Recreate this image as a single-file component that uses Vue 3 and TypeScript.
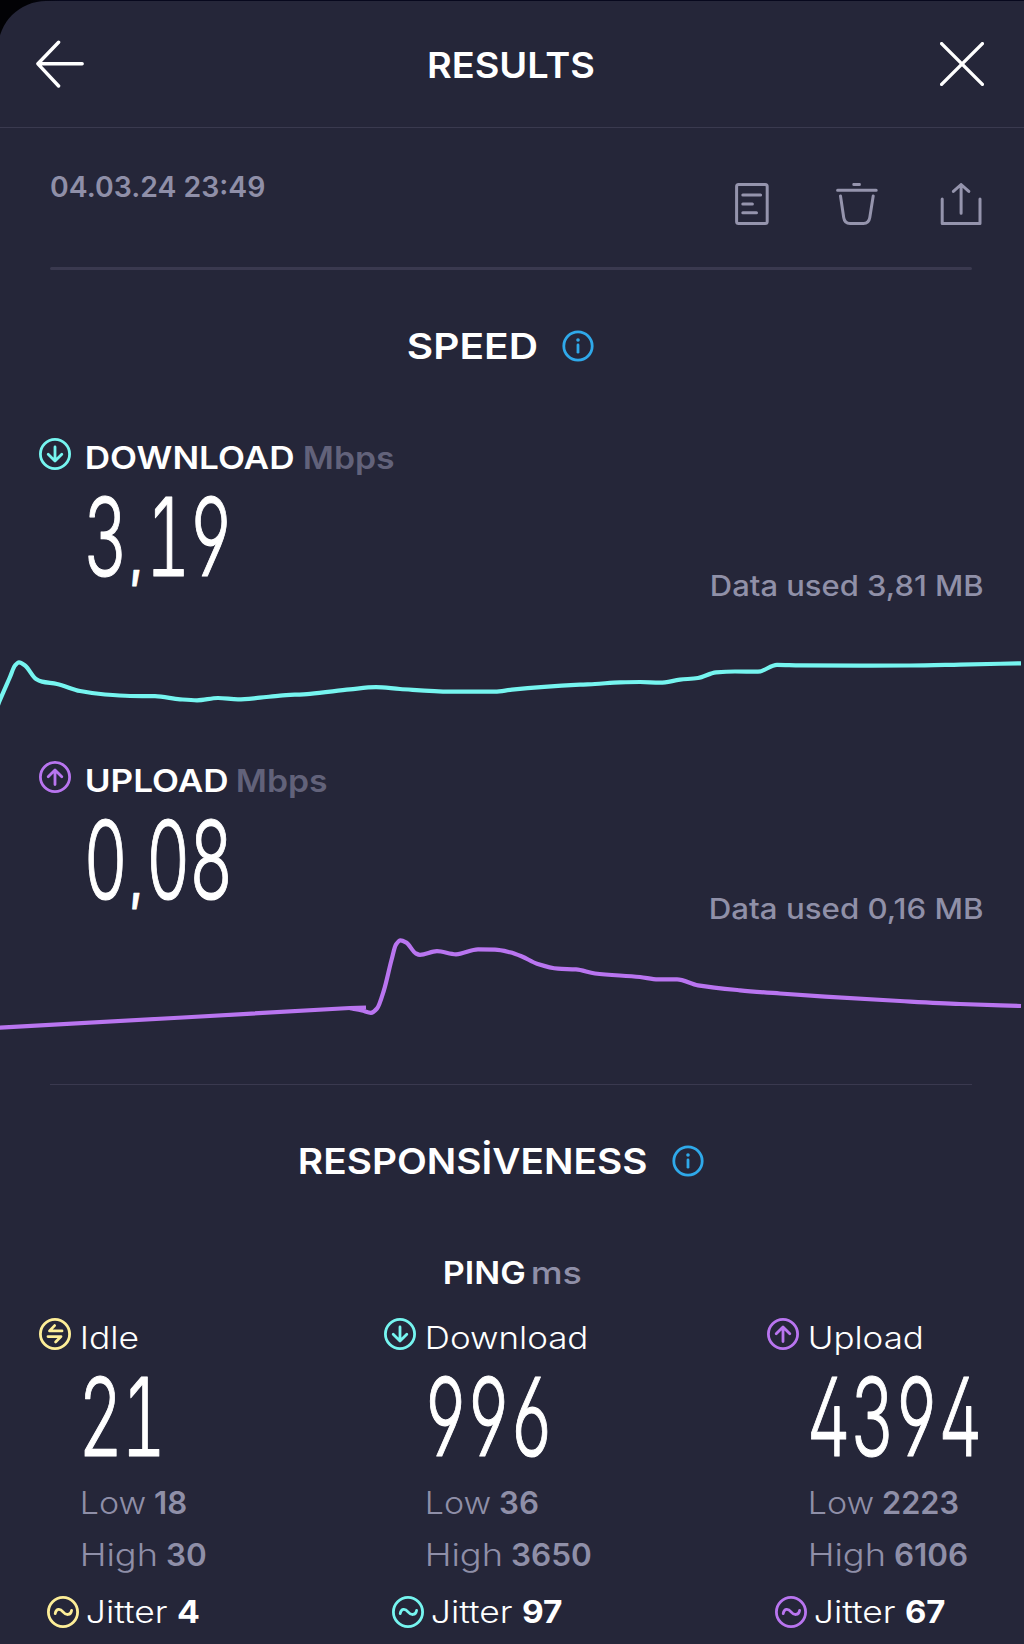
<script setup lang="ts">
import { defineComponent, h } from 'vue'

const FONT = 'Inter, "Open Sans", sans-serif'
const CAP_RATIO = 0.727

const canvas = document.createElement('canvas').getContext('2d')!

// Label whose visible glyphs span exactly `w` pixels; the box is the cap height.
const FitText = defineComponent({
  props: {
    text: { type: String, required: true },
    w: { type: Number, required: true },
    cap: { type: Number, required: true },
    weight: { type: Number, default: 580 },
  },
  setup(props) {
    return () => {
      const size = props.cap / CAP_RATIO
      canvas.font = `${props.weight} ${size}px ${FONT}`
      const m = canvas.measureText(props.text)
      const sx = props.w / (m.actualBoundingBoxLeft + m.actualBoundingBoxRight)
      return h(
        'svg',
        { width: props.w, height: props.cap, style: 'display:block;overflow:visible;flex:none' },
        [
          h(
            'text',
            {
              x: m.actualBoundingBoxLeft,
              y: props.cap,
              transform: `scale(${sx.toFixed(4)} 1)`,
              fill: 'currentColor',
              'font-family': FONT,
              'font-size': size,
              'font-weight': props.weight,
            },
            props.text,
          ),
        ],
      )
    }
  },
})

// Tall condensed readout digits on a fixed pitch, with open 4, 6 and 9.
const DIGIT_SCALE = 0.63
const BigNumber = defineComponent({
  props: {
    value: { type: String, required: true },
    pitch: { type: Number, default: 43 },
  },
  setup(props) {
    return () => {
      let pos = 0
      const xs: number[] = []
      for (const c of props.value) {
        xs.push((pos + (c === ',' ? 4.2 : 16.7)) / DIGIT_SCALE)
        pos += c === ',' ? 19.3 : props.pitch
      }
      return h(
        'svg',
        { width: pos, height: 79, style: 'display:block;overflow:visible;flex:none' },
        [
          h(
            'text',
            {
              x: xs.map((v) => v.toFixed(2)).join(' '),
              y: 79,
              'text-anchor': 'middle',
              transform: `scale(${DIGIT_SCALE} 1)`,
              fill: '#fff',
              stroke: '#fff',
              'stroke-width': 1.2,
              'stroke-linejoin': 'round',
              'font-family': 'Inter, Roboto, sans-serif',
              'font-size': 108.5,
              'font-weight': 300,
              style: 'font-feature-settings: "tnum", "cv02", "cv03", "cv04"',
            },
            props.value
              .split(/(,)/)
              .map((part) =>
                part === ',' ? h('tspan', { 'font-size': 50, 'font-weight': 800 }, part) : part,
              ),
          ),
        ],
      )
    }
  },
})

const ICONS: Record<string, string> = {
  down: 'M16 9V22.5M9.2 16.2L16 23L22.8 16.2',
  up: 'M16 23.5V9.5M9.2 15.8L16 9L22.8 15.8',
  idle: 'M23 12.9H10.5L15.6 7.6M9 18.6H22L16.6 24',
  wave: 'M8.2 17.6C9 12.6 13 12.2 16 15.8C19.2 19.6 23.6 19.6 24.6 14.4',
}

const RoundIcon = defineComponent({
  props: { name: { type: String, required: true }, color: { type: String, required: true } },
  setup(props) {
    return () =>
      h(
        'svg',
        {
          width: 32,
          height: 32,
          viewBox: '0 0 32 32',
          fill: 'none',
          stroke: props.color,
          'stroke-width': 2.8,
          'stroke-linecap': 'round',
          'stroke-linejoin': 'round',
          style: 'display:block;flex:none',
        },
        [h('circle', { cx: 16, cy: 16, r: 14.6 }), h('path', { d: ICONS[props.name] })],
      )
  },
})

type Pt = [number, number]

// Monotone cubic interpolation through the samples.
function smooth(p: Pt[]): string {
  const n = p.length
  const d: number[] = []
  for (let i = 0; i < n - 1; i++) d.push((p[i + 1][1] - p[i][1]) / (p[i + 1][0] - p[i][0]))
  const t: number[] = p.map((_, i) => {
    if (i === 0) return d[0]
    if (i === n - 1) return d[n - 2]
    if (d[i - 1] * d[i] <= 0) return 0
    return (2 * d[i - 1] * d[i]) / (d[i - 1] + d[i])
  })
  let s = `M${p[0][0]} ${p[0][1]}`
  for (let i = 0; i < n - 1; i++) {
    const k = (p[i + 1][0] - p[i][0]) / 3
    s += `C${p[i][0] + k} ${p[i][1] + t[i] * k} ${p[i + 1][0] - k} ${p[i + 1][1] - t[i + 1] * k} ${p[i + 1][0]} ${p[i + 1][1]}`
  }
  return s
}

const CYAN = '#76f5f0'
const PURPLE = '#b975f0'
const YELLOW = '#fdee98'

const downloadLine = smooth([
  [-2, 65], [0, 60], [10, 37], [15, 25.5], [19, 22.3], [25, 25.5], [36, 39], [42, 41.6], [57, 44], [80, 51], [105, 54.5],
  [130, 56], [155, 56.2], [180, 59.3], [197, 60.3], [218, 58], [238, 59.4], [260, 57.7], [280, 55.6], [310, 53.8],
  [350, 49.4], [376, 47.2], [400, 49], [450, 51.6], [495, 51.7], [512, 49.6], [580, 44.7], [595, 44], [620, 42.3],
  [640, 42], [660, 42.7], [680, 39.7], [698, 38], [716, 32.3], [735, 31.5], [758, 31.7], [777, 24.8], [800, 25.3],
  [860, 25.6], [910, 25.5], [960, 24.6], [1021, 23.3],
])
const uploadBase = 'M-2 64.8L183 54.5L350 45L366 44.5'
const uploadLine = smooth([
  [350, 45.2], [362, 47.5], [371, 49.8], [377, 45.5], [384, 27], [391.5, -3], [396, -18.5], [400.5, -22.7], [406, -20.6],
  [416, -9.5], [420, -8.2], [437, -11.8], [456, -8.7], [478, -13.6], [495, -13.3], [510, -10.7], [522, -6.5],
  [537, 0.7], [558, 5.7], [576, 6.4], [595, 10.5], [640, 14], [658, 16.4], [677, 16.4], [698, 22.4], [740, 27.3],
  [780, 30.5], [825, 33.7], [900, 38], [960, 41], [1021, 43],
])

const speeds = [
  {
    icon: 'down', color: CYAN, label: 'DOWNLOAD', labelW: 206, gap: 12.5, value: '3,19',
    used: 'Data used 3,81 MB', usedW: 270, paths: [downloadLine],
  },
  {
    icon: 'up', color: PURPLE, label: 'UPLOAD', labelW: 140, gap: 11, value: '0,08',
    used: 'Data used 0,16 MB', usedW: 271, paths: [uploadBase, uploadLine],
  },
]

const pings = [
  {
    icon: 'idle', color: YELLOW, label: 'Idle', labelW: 56, value: '21', pitch: 43,
    low: '18', lowW: 31.5, high: '30', highW: 38.5, jitter: '4', jitterW: 21,
  },
  {
    icon: 'down', color: CYAN, label: 'Download', labelW: 159.5, value: '996', pitch: 43,
    low: '36', lowW: 38.3, high: '3650', highW: 78.5, jitter: '97', jitterW: 38.5,
  },
  {
    icon: 'up', color: PURPLE, label: 'Upload', labelW: 112, value: '4394', pitch: 43.9,
    low: '2223', lowW: 74.5, high: '6106', highW: 72.5, jitter: '67', jitterW: 38.5,
  },
]
</script>

<template>
  <div class="screen">
    <div class="panel">
      <header class="header">
        <svg class="back" width="48" height="48" viewBox="0 0 48 48">
          <path d="M46.2 23.8H2M22.6 2.2L1.9 23.8L22.6 46" />
        </svg>
        <FitText text="RESULTS" :w="164.6" :cap="26" />
        <svg class="close" width="44" height="44" viewBox="0 0 44 44">
          <path d="M1.6 1.6L42.4 42.4M42.4 1.6L1.6 42.4" />
        </svg>
      </header>

      <div class="meta">
        <FitText class="date" text="04.03.24 23:49" :w="213.5" :cap="20.3" />
        <div class="actions">
          <svg width="34" height="42" viewBox="0 0 34 42">
            <rect x="1.6" y="1.6" width="30.6" height="38.8" rx="2" />
            <path d="M7.8 12H25.6M7.8 21H17.4M7.8 29.8H21.5" />
          </svg>
          <svg width="42" height="42" viewBox="0 0 42 42">
            <path d="M17.8 1.4H23.4M1.6 7.3H40.2M4.5 13L7.7 34.5Q8.6 40.5 14 40.5H27.4Q32.8 40.5 33.8 34.5L37.2 13" />
          </svg>
          <svg width="42" height="42" viewBox="0 0 42 42">
            <path d="M2.2 16V40.4H40V16M21.1 1.8V30.2M13.4 8.4L21.1 1.5L28.8 8.4" />
          </svg>
        </div>
      </div>
      <div class="rule thick"></div>

      <div class="title speed-title">
        <FitText text="SPEED" :w="128" :cap="26" />
        <svg class="info" width="32" height="32" viewBox="0 0 32 32">
          <circle cx="16" cy="16" r="14.2" />
          <path d="M16 14.9V22.2" />
          <circle class="dot" cx="16" cy="10" r="1.8" />
        </svg>
      </div>

      <section v-for="s in speeds" :key="s.label" class="speed">
        <div class="speed-head">
          <RoundIcon :name="s.icon" :color="s.color" />
          <div class="speed-label" :style="{ gap: s.gap + 'px' }">
            <FitText :text="s.label" :w="s.labelW" :cap="22.5" />
            <FitText class="unit" text="Mbps" :w="88.5" :cap="22.5" />
          </div>
        </div>
        <BigNumber class="speed-value" :value="s.value" />
        <FitText class="used" :text="s.used" :w="s.usedW" :cap="20.4" :weight="530" />
        <svg class="chart" width="1024" height="80" viewBox="0 0 1024 80">
          <path v-for="(d, i) in s.paths" :key="i" :d="d" :stroke="s.color" />
        </svg>
      </section>
      <div class="rule thin"></div>

      <div class="title resp-title">
        <FitText text="RESPONSİVENESS" :w="346" :cap="26" />
        <svg class="info" width="32" height="32" viewBox="0 0 32 32">
          <circle cx="16" cy="16" r="14.2" />
          <path d="M16 14.9V22.2" />
          <circle class="dot" cx="16" cy="10" r="1.8" />
        </svg>
      </div>

      <div class="ping-title">
        <FitText text="PING" :w="79.5" :cap="22.5" />
        <FitText class="muted" text="ms" :w="48" :cap="22.5" :weight="530" />
      </div>

      <div class="pings">
        <div v-for="p in pings" :key="p.label" class="ping">
          <div class="ping-head">
            <RoundIcon :name="p.icon" :color="p.color" />
            <FitText class="ping-label" :text="p.label" :w="p.labelW" :cap="22.5" :weight="360" />
          </div>
          <BigNumber class="ping-value" :value="p.value" :pitch="p.pitch" />
          <div class="stat low muted">
            <FitText text="Low" :w="63" :cap="22.3" :weight="310" />
            <FitText :text="p.low" :w="p.lowW" :cap="22.3" :weight="640" />
          </div>
          <div class="stat high muted">
            <FitText text="High" :w="73.5" :cap="22.3" :weight="310" />
            <FitText :text="p.high" :w="p.highW" :cap="22.3" :weight="640" />
          </div>
          <div class="jitter">
            <RoundIcon name="wave" :color="p.color" />
            <FitText class="jitter-label" text="Jitter" :w="80.5" :cap="22.3" :weight="360" />
            <FitText class="jitter-value" :text="p.jitter" :w="p.jitterW" :cap="22.3" :weight="660" />
          </div>
        </div>
      </div>
    </div>
  </div>
</template>

<style>
body {
  margin: 0;
  background: #252639;
}
</style>

<style scoped>
.screen {
  width: 1024px;
  height: 1644px;
  overflow: hidden;
  box-sizing: border-box;
  padding-top: 1px;
  background: linear-gradient(90deg, #020205 0, #020205 30px, #07081d 60px);
  color: #fff;
}
.panel {
  box-sizing: border-box;
  width: 1026px;
  height: 1643px;
  margin-left: -2px;
  padding-left: 2px;
  border-top-left-radius: 48px;
  background: #252639;
}
.header {
  display: flex;
  justify-content: space-between;
  align-items: flex-start;
  box-sizing: border-box;
  height: 127px;
  margin-left: -2px;
  padding: 39px 40px 0 38px;
  border-bottom: 1px solid #3a3a4f;
}
.header > :nth-child(2) {
  margin: 12.3px 0 0 -0.8px;
}
.back,
.close {
  fill: none;
  stroke: #fff;
  stroke-width: 3.4;
  stroke-linecap: round;
  stroke-linejoin: round;
}
.close {
  margin-top: 2px;
}
.meta {
  display: flex;
  justify-content: space-between;
  align-items: flex-start;
  height: 139px;
  padding: 0 42px 0 51px;
}
.date {
  margin-top: 48.9px;
  color: #8f8fa8;
}
.actions {
  display: flex;
  gap: 66px;
  margin-top: 55px;
}
.actions svg {
  fill: none;
  stroke: #9594ad;
  stroke-width: 3;
  stroke-linecap: round;
  stroke-linejoin: round;
}
.actions svg:first-child {
  margin-right: 1px;
}
.actions svg:last-child {
  margin-left: -4px;
}
.rule {
  margin: 0 52px 0 50px;
  background: #3a394f;
}
.thick {
  height: 3px;
  border-radius: 1.5px;
}
.thin {
  height: 1px;
  margin-top: 1px;
}
.title {
  display: flex;
  align-items: center;
  gap: 26px;
  height: 32px;
}
.speed-title {
  padding: 60px 0 75px 408.3px;
}
.info {
  fill: none;
  stroke: #2fa9ea;
  stroke-width: 2.8;
  stroke-linecap: round;
}
.info .dot {
  fill: #2fa9ea;
  stroke: none;
}
.speed {
  display: flex;
  flex-direction: column;
  height: 323px;
}
.speed-head {
  display: flex;
  gap: 15.5px;
  height: 32px;
  padding: 1px 0 0 39px;
}
.speed-label {
  display: flex;
  margin-top: 8px;
}
.unit {
  color: #62627a;
}
.speed-value {
  margin: 27px 0 0 89px;
}
.used {
  align-self: flex-end;
  margin: 0 42px 0 0;
  color: #9090a8;
}
.chart {
  display: block;
  flex: none;
  margin-top: 43.6px;
  overflow: visible;
  fill: none;
  stroke-width: 4.2;
  stroke-linejoin: round;
}
.resp-title {
  padding: 60px 0 0 299.7px;
}
.ping-title {
  display: flex;
  gap: 9px;
  padding: 84px 0 0 444.5px;
}
.muted {
  color: #8f8fa8;
}
.pings {
  display: grid;
  grid-template-columns: 345px 383px 1fr;
  margin-top: 34.5px;
  padding-left: 39px;
}
.ping-head {
  display: flex;
  gap: 10.5px;
  height: 32px;
}
.ping-label {
  margin-top: 8px;
}
.ping-value {
  margin: 27px 0 0 44.7px;
}
.stat {
  display: flex;
  gap: 10px;
  padding-left: 42.6px;
}
.low {
  margin-top: 35.6px;
}
.high {
  gap: 11.5px;
  margin-top: 29.8px;
}
.jitter {
  display: flex;
  margin-top: 29.9px;
  padding-left: 8px;
}
.jitter-label {
  margin: 5px 0 0 8px;
}
.jitter-value {
  margin: 5px 0 0 10.2px;
}
</style>
